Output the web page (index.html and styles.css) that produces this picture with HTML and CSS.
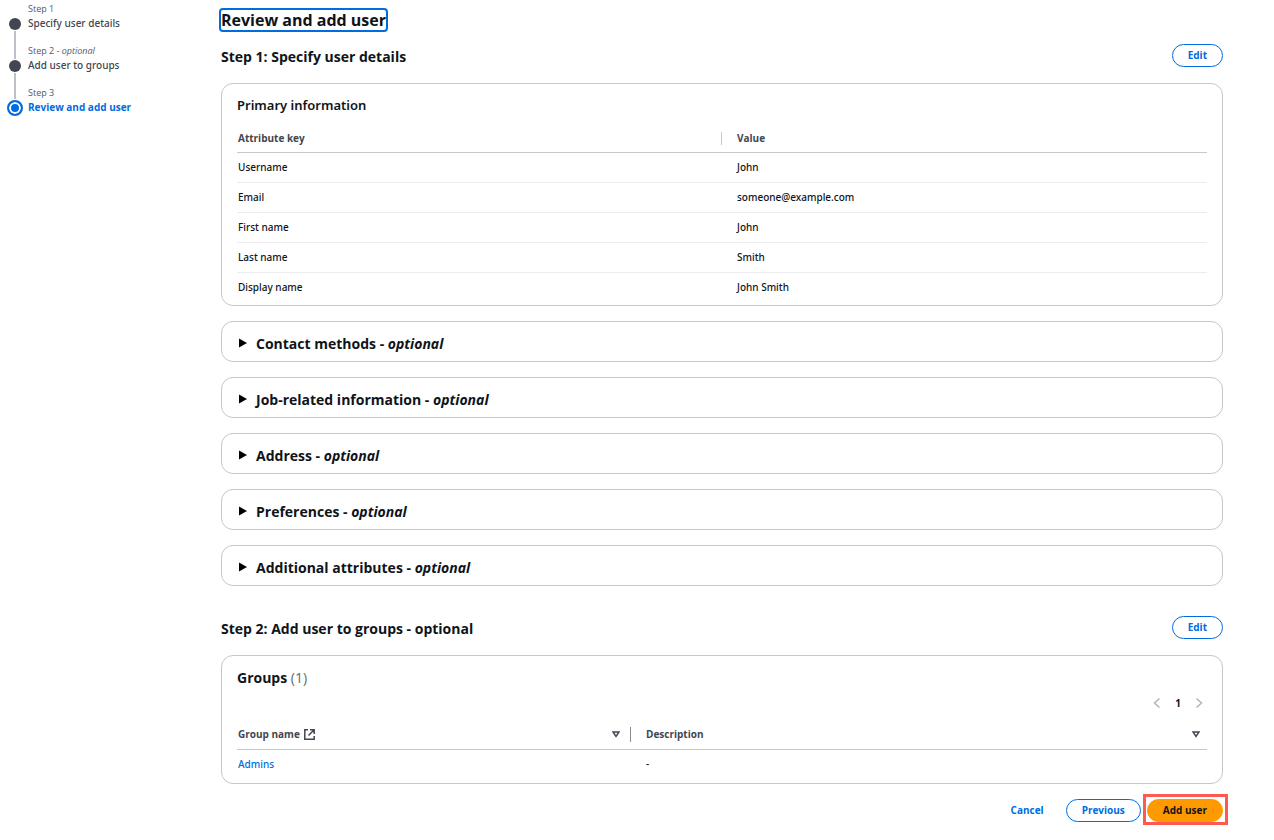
FILE: index.html
```html
<!DOCTYPE html>
<html lang="en">
<head>
    <meta charset="UTF-8">
    <meta name="viewport" content="width=device-width, initial-scale=1.0">
    <title>Review and add user</title>
    <link rel="stylesheet" href="styles.css">
</head>
<body>

    <div class="layout">
        <nav class="steps" aria-label="Steps">
            <ol>
                <li class="step">
                    <span class="marker"><span class="dot"></span></span>
                    <div>
                        <div class="step-number">Step 1</div>
                        <a href="#details" class="step-name">Specify user details</a>
                    </div>
                </li>
                <li class="step">
                    <span class="marker"><span class="dot"></span></span>
                    <div>
                        <div class="step-number">Step 2 - <em>optional</em></div>
                        <a href="#groups" class="step-name">Add user to groups</a>
                    </div>
                </li>
                <li class="step active">
                    <span class="marker"><span class="dot"></span></span>
                    <div>
                        <div class="step-number">Step 3</div>
                        <a href="#review" class="step-name" aria-current="step">Review and add user</a>
                    </div>
                </li>
            </ol>
        </nav>

        <main class="content">
            <h1 id="review">Review and add user</h1>

            <div class="section-header" id="details">
                <h2>Step 1: Specify user details</h2>
                <button type="button" class="btn">Edit</button>
            </div>

            <section class="card">
                <h3>Primary information</h3>
                <table class="info-table">
                    <thead>
                        <tr>
                            <th>Attribute key</th>
                            <th>Value</th>
                        </tr>
                    </thead>
                    <tbody>
                        <tr><td>Username</td><td>John</td></tr>
                        <tr><td>Email</td><td>someone@example.com</td></tr>
                        <tr><td>First name</td><td>John</td></tr>
                        <tr><td>Last name</td><td>Smith</td></tr>
                        <tr><td>Display name</td><td>John Smith</td></tr>
                    </tbody>
                </table>
            </section>

            <details class="card expandable">
                <summary>
                    <svg width="8" height="12" viewBox="0 0 8 12"><path d="M0 0.5 L8 5 L0 9.5 Z"/></svg>
                    <span>Contact methods - <em>optional</em></span>
                </summary>
            </details>
            <details class="card expandable">
                <summary>
                    <svg width="8" height="12" viewBox="0 0 8 12"><path d="M0 0.5 L8 5 L0 9.5 Z"/></svg>
                    <span>Job-related information - <em>optional</em></span>
                </summary>
            </details>
            <details class="card expandable">
                <summary>
                    <svg width="8" height="12" viewBox="0 0 8 12"><path d="M0 0.5 L8 5 L0 9.5 Z"/></svg>
                    <span>Address - <em>optional</em></span>
                </summary>
            </details>
            <details class="card expandable">
                <summary>
                    <svg width="8" height="12" viewBox="0 0 8 12"><path d="M0 0.5 L8 5 L0 9.5 Z"/></svg>
                    <span>Preferences - <em>optional</em></span>
                </summary>
            </details>
            <details class="card expandable">
                <summary>
                    <svg width="8" height="12" viewBox="0 0 8 12"><path d="M0 0.5 L8 5 L0 9.5 Z"/></svg>
                    <span>Additional attributes - <em>optional</em></span>
                </summary>
            </details>

            <div class="section-header second" id="groups">
                <h2>Step 2: Add user to groups - optional</h2>
                <button type="button" class="btn">Edit</button>
            </div>

            <section class="card">
                <h3 class="large">Groups <span class="counter">(1)</span></h3>
                <div class="pagination">
                    <button type="button" aria-label="Previous page" disabled>
                        <svg width="8" height="12" viewBox="0 0 8 12"><path d="M6.5 1.5 L1.5 6 L6.5 10.5"/></svg>
                    </button>
                    <button type="button" class="page" aria-current="page">1</button>
                    <button type="button" aria-label="Next page" disabled>
                        <svg width="8" height="12" viewBox="0 0 8 12"><path d="M1.5 1.5 L6.5 6 L1.5 10.5"/></svg>
                    </button>
                </div>
                <table class="groups-table">
                    <thead>
                        <tr>
                            <th class="name-col">
                                <div class="th-content">
                                    <span>Group name</span>
                                    <svg class="external" width="11" height="11" viewBox="0 0 11 11"><path d="M4 0.8 H0.8 V10.2 H10.2 V7 M6 0.8 H10.2 V5 M10.2 0.8 L4.5 6.5"/></svg>
                                    <svg class="sort" width="8" height="7" viewBox="0 0 8 7"><path d="M1 1 H7 L4 5.5 Z"/></svg>
                                </div>
                            </th>
                            <th>
                                <div class="th-content">
                                    <span>Description</span>
                                    <svg class="sort" width="8" height="7" viewBox="0 0 8 7"><path d="M1 1 H7 L4 5.5 Z"/></svg>
                                </div>
                            </th>
                        </tr>
                    </thead>
                    <tbody>
                        <tr><td><a href="#admins">Admins</a></td><td>-</td></tr>
                    </tbody>
                </table>
            </section>

            <div class="actions">
                <button type="button" class="btn link">Cancel</button>
                <button type="button" class="btn">Previous</button>
                <span class="highlight"><button type="submit" class="btn primary">Add user</button></span>
            </div>
        </main>
    </div>

</body>
</html>
```
FILE: styles.css
```css
body {
    font-family: "Open Sans", "Noto Sans", sans-serif;
    font-size: 10px;
    line-height: 14px;
    margin: 0;
    color: #0f141a;
    background-color: #ffffff;
}

h1, h2, h3, ol {
    margin: 0;
    padding: 0;
}

a {
    color: #006ce0;
    text-decoration: none;
}

.layout {
    display: grid;
    grid-template-columns: 221px 1fr;
    box-sizing: border-box;
    min-height: 100vh;
    padding: 0 51px 16px 0;
}

/* Step navigation */
.steps {
    padding: 2px 0 0 7px;
}

.steps ol {
    list-style: none;
}

.step {
    display: flex;
    gap: 5px;
    height: 42px;
}

.marker {
    display: flex;
    flex-direction: column;
    align-items: center;
    gap: 1px;
    width: 16px;
}

.marker::before {
    content: "";
    width: 2px;
    height: 15px;
    background-color: #c0c0c8;
}

.marker::after {
    content: "";
    flex: 1;
    width: 2px;
    background-color: #c0c0c8;
}

.step:first-child .marker::before,
.step:last-child .marker::after {
    background-color: transparent;
}

.dot {
    box-sizing: border-box;
    width: 12px;
    height: 12px;
    border-radius: 50%;
    background-color: #424650;
}

.step-number {
    font-size: 9px;
    color: #555962;
}

.step-name, td {
    font-family: "Noto Sans", "Open Sans", sans-serif;
    font-weight: 500;
}

.step-name {
    display: block;
    color: #424650;
}

.active .marker::before {
    height: 13px;
}

.active .dot {
    width: 16px;
    height: 16px;
    border: 2px solid #006ce0;
    background-color: #006ce0;
    box-shadow: inset 0 0 0 2px #ffffff;
}

.active .step-name {
    font-family: inherit;
    font-weight: 700;
    color: #006ce0;
}

/* Headings */
.content {
    padding-top: 10px;
}

h1 {
    width: fit-content;
    font-size: 16px;
    line-height: 20px;
    font-weight: 700;
    border-radius: 2px;
    outline: 2px solid #006ce0;
}

.section-header {
    display: flex;
    justify-content: space-between;
    align-items: center;
    margin: 14px 0 16px;
}

.section-header.second {
    margin-top: 30px;
}

h3 {
    font-family: "Noto Sans", "Open Sans", sans-serif;
    font-size: 13px;
    line-height: 20px;
    font-weight: 600;
}

h2, .large, .expandable summary {
    font-family: inherit;
    font-size: 14px;
    line-height: 20px;
    font-weight: 700;
}

h2 {
    padding-top: 2px;
}

.large {
    padding-top: 1px;
}

.counter {
    font-weight: 400;
    color: #656871;
}

/* Buttons */
.btn {
    font: inherit;
    font-weight: 700;
    line-height: 15px;
    padding: 3px 15px;
    color: #006ce0;
    background-color: #ffffff;
    border: 1px solid #006ce0;
    border-radius: 12px;
    cursor: pointer;
}

.btn.link {
    border-color: transparent;
}

.btn.primary {
    color: #0f141a;
    background-color: #ff9900;
    border-color: #ff9900;
}

/* Cards */
.card {
    padding: 11px 15px 2px;
    border: 1px solid #c6c6cd;
    border-radius: 12px;
}

.expandable {
    margin-top: 15px;
    padding: 0 17px;
}

.expandable summary {
    display: flex;
    align-items: center;
    gap: 9px;
    padding: 12px 0 7px;
    list-style: none;
    cursor: pointer;
}

/* Tables */
table {
    width: 100%;
    table-layout: fixed;
    border-collapse: separate;
    border-spacing: 0;
}

th, td {
    padding: 7px 1px 8px;
    text-align: left;
    border-bottom: 1px solid #ebebf0;
}

th {
    padding: 6px 1px 7px;
    color: #424650;
    border-bottom-color: #c6c6cd;
    background: linear-gradient(#c6c6cd, #c6c6cd) no-repeat right 7px / 1px 13px;
}

th:last-child {
    background: none;
}

th:last-child, td:last-child {
    padding-left: 15px;
}

tbody tr:last-child td {
    border-bottom-color: transparent;
}

.info-table {
    margin-top: 10px;
}

.name-col {
    width: 392px;
}

.groups-table {
    margin: 9px 0 1px;
}

.groups-table th {
    padding: 8px 1px;
    background-position: right 8px;
    background-size: 1px 15px;
}

.groups-table th:last-child {
    padding-left: 15px;
}

.groups-table .name-col {
    background-image: linear-gradient(#8c8c94, #8c8c94);
}

.th-content {
    display: flex;
    align-items: center;
    gap: 4px;
}

.sort {
    margin: 0 10px 0 auto;
}

th:last-child .sort {
    margin-right: 6px;
}

.external, .sort {
    fill: none;
    stroke: #424650;
    stroke-width: 1.5;
}

/* Pagination */
.pagination {
    display: flex;
    justify-content: flex-end;
    gap: 13px;
    padding: 8px 4px 0 0;
}

.pagination button {
    display: flex;
    align-items: center;
    font: inherit;
    padding: 0;
    border: none;
    background: none;
}

.pagination .page {
    justify-content: center;
    width: 8px;
    font-weight: 700;
    color: #0f141a;
}

.pagination path {
    fill: none;
    stroke: #b4b4bb;
    stroke-width: 1.5;
}

/* Footer actions */
.actions {
    display: flex;
    justify-content: flex-end;
    gap: 6px;
    margin-top: 15px;
}

.highlight {
    position: relative;
}

.highlight::after {
    content: "";
    position: absolute;
    inset: -5px -5px -3px -4px;
    border: 3px solid #ff5a4f;
    pointer-events: none;
}
```
